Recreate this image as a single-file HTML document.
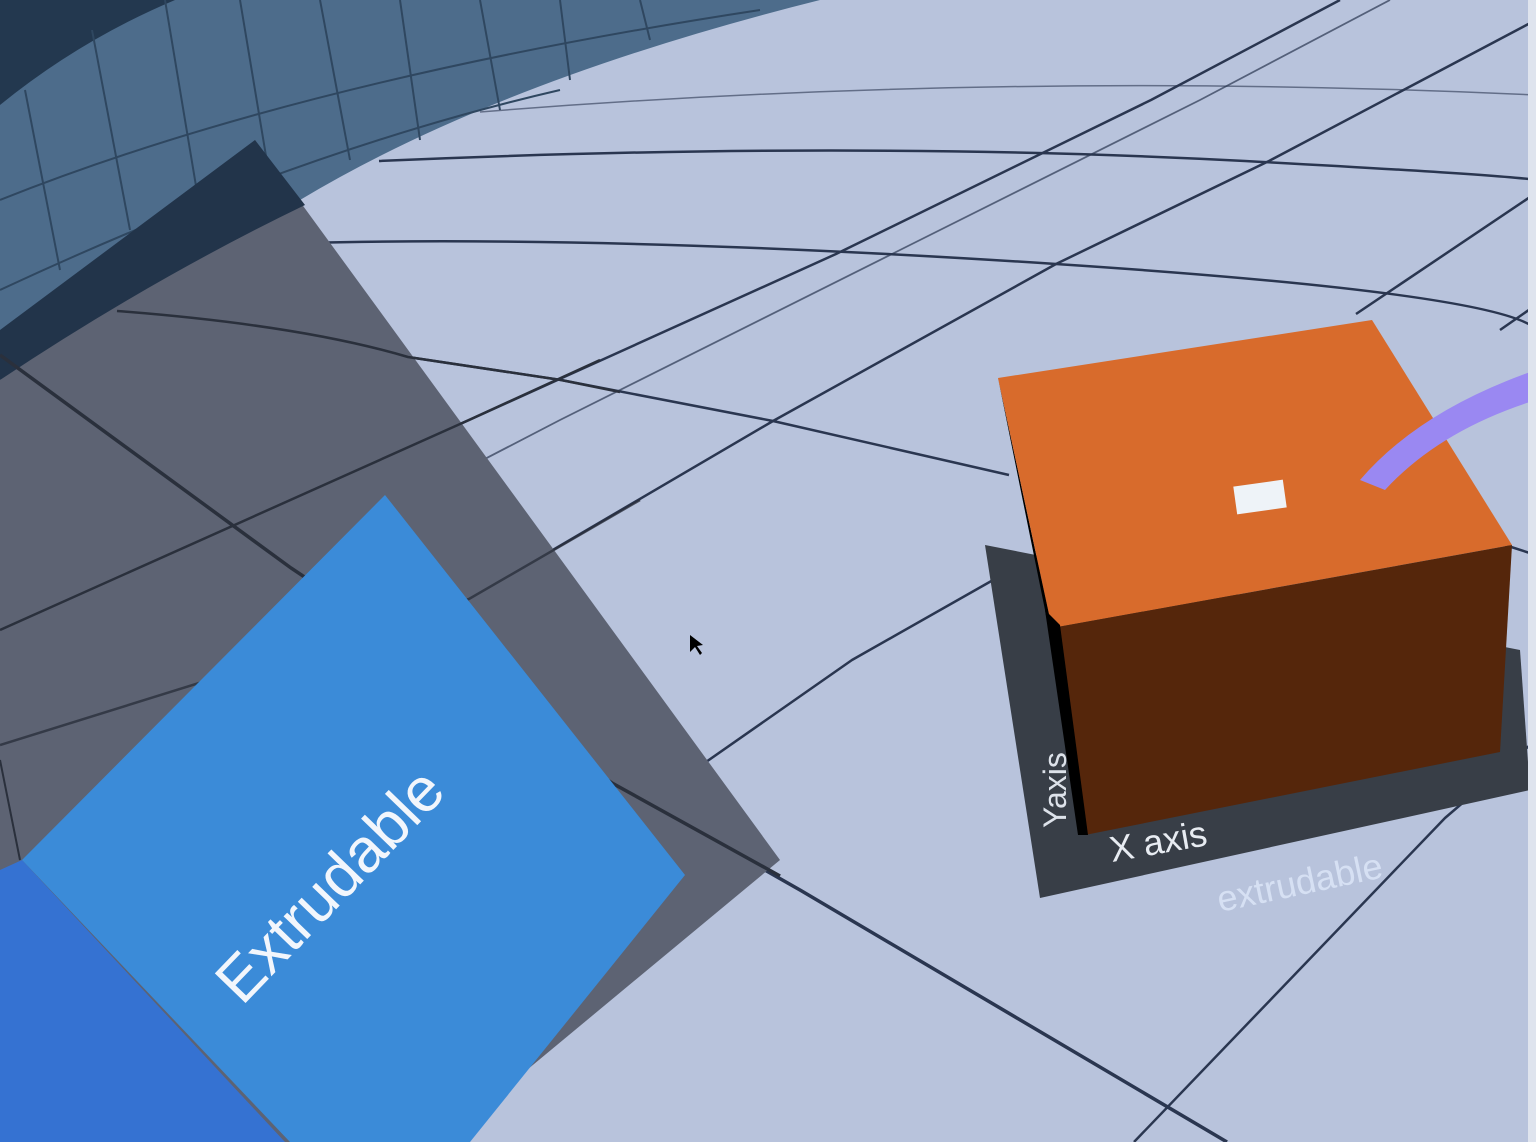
<!DOCTYPE html>
<html><head><meta charset="utf-8"><style>
html,body{margin:0;padding:0;width:1536px;height:1142px;overflow:hidden;background:#b8c3dc}
svg{display:block}
text{font-family:"Liberation Sans",sans-serif}
</style></head><body>
<svg width="1536" height="1142" viewBox="0 0 1536 1142" xmlns="http://www.w3.org/2000/svg">
<rect width="1536" height="1142" fill="#b8c3dc"/>
<!-- wall -->
<path d="M0,0 L820,0 Q500,80 300,200 Q150,270 0,370 Z" fill="#4d6c8b"/>
<path d="M0,0 L175,0 Q80,40 0,105 Z" fill="#23384f"/>
<g stroke="#2f4760" stroke-width="2" fill="none">
<path d="M25,90 L60,270"/><path d="M92,30 L130,230"/><path d="M165,0 L200,210"/><path d="M240,0 L270,180"/><path d="M320,0 L350,160"/><path d="M400,0 L420,140"/><path d="M480,0 L500,110"/><path d="M560,0 L570,80"/><path d="M640,0 L650,40"/>
<path d="M0,200 Q300,80 760,10"/><path d="M0,290 Q300,150 560,90"/>
</g>
<!-- floor grid -->
<g stroke="#2a3650" stroke-width="2.5" fill="none" stroke-linejoin="round">
<path d="M480,112 Q1000,70 1536,95" stroke-width="1.5" opacity="0.6"/>
<path d="M379,161 Q850,140 1245,161 T1536,186"/>
<path d="M300,243 Q615,235 1056,264 T1536,329"/>
<path d="M117,311 Q300,325 408,357 L561,380 L773,421 L1009,475"/>
<path d="M1505,545 L1536,555"/>
<path d="M0,630 L469,420 L836,254 L1151,100 L1340,0"/>
<path d="M0,745 L469,599 L773,421 L1056,264 L1269,161 L1536,20"/>
<path d="M290,560 L560,420 L900,250 L1200,100 L1390,0" opacity="0.7" stroke-width="1.8"/>
<path d="M643,806 L852,660 L1009,571"/>
<path d="M1356,314 L1536,193"/>
<path d="M1134,1142 L1445,818 L1536,740"/>
<path d="M1500,330 L1536,305"/>
<path d="M0,355 L291,568 L612,783 L800,890 L1227,1142" stroke-width="3.5"/>
</g>
<!-- dark translucent panel -->
<path d="M255,140 L780,860 L440,1142 L0,1142 L0,380 Z" fill="#5d6373"/>
<path d="M255,140 L305,205 Q150,280 0,380 L0,330 Z" fill="#22344a"/>
<g stroke="#2a303c" stroke-width="2.5" fill="none">
<path d="M117,311 Q300,325 408,357 L561,380 L620,392"/>
<path d="M0,630 L469,420 L600,360"/>
<path d="M0,745 L469,599 L640,500" opacity="0.8"/>
<path d="M0,355 L291,568 L612,783 L780,876" stroke-width="3.5"/>
<path d="M0,760 L20,860" stroke-width="2"/>
</g>
<!-- blue cards -->
<path d="M0,870 L22,860 L285,1142 L0,1142 Z" fill="#3572d2"/>
<path d="M385,495 L685,875 L470,1142 L290,1142 L22,860 Z" fill="#3b8bd8"/>
<text x="0" y="0" transform="translate(345,900) rotate(-46)" text-anchor="middle" font-size="62" fill="#f2f6fc">Extrudable</text>
<!-- base plate -->
<path d="M985,545 L1520,650 L1530,790 L1040,898 Z" fill="#383e47"/>
<!-- box -->
<path d="M998,378 L1052,628 L1085,835 L1045,610 Z" fill="#000"/>
<path d="M998,378 L1372,320 L1512,545 L1052,628 Z" fill="#d86b2c"/>
<path d="M1052,628 L1512,545 L1500,752 L1085,835 Z" fill="#55260b"/>
<path d="M1045,610 L1060,625 L1088,835 L1078,835 Z" fill="#000"/>
<rect x="1235" y="483" width="50" height="28" fill="#eef3f8" transform="rotate(-8 1260 497)"/>
<path d="M1360,480 Q1420,410 1536,370 L1536,400 Q1440,430 1385,490 Z" fill="#9a88f2"/>
<text x="0" y="0" transform="translate(1112,862) rotate(-10)" font-size="36" fill="#e8ecf2">X axis</text>
<text x="0" y="0" transform="translate(1066,828) rotate(-90)" font-size="32" fill="#dde2ea">Yaxis</text>
<text x="0" y="0" transform="translate(1220,912) rotate(-12)" font-size="36" fill="#dce6f8" opacity="0.85">extrudable</text>
<rect x="1528" y="0" width="8" height="1142" fill="#dfe4ee"/>
<path d="M690,635 L690,652 L695,647 L700,655 L702,653 L697,646 L703,645 Z" fill="#000"/>
</svg>
</body></html>
